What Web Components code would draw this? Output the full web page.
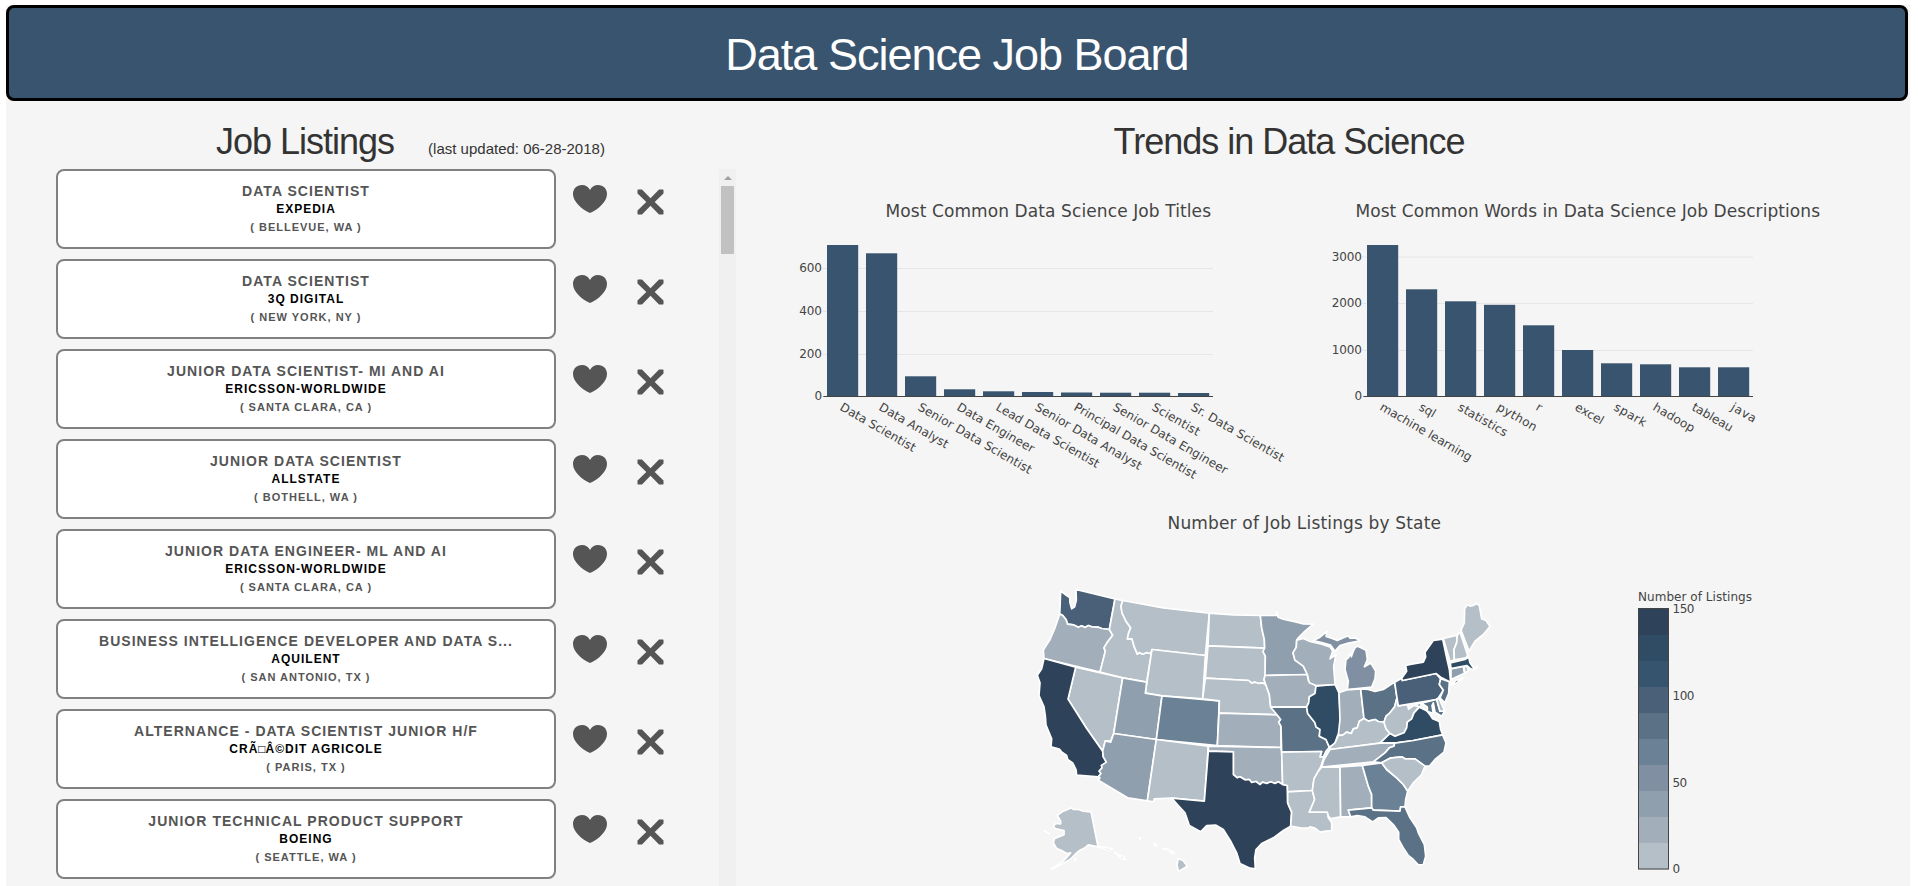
<!DOCTYPE html>
<html lang="en">
<head>
<meta charset="utf-8">
<title>Data Science Job Board</title>
<style>
html,body{margin:0;height:100%;overflow:hidden;background:#fff;font-family:"Liberation Sans",Arial,sans-serif}
</style>
</head>
<body>
<job-board></job-board>
<script>
const define = (name, html, setup) => {
  const t = document.createElement('template');
  t.innerHTML = html;
  customElements.define(name, class extends HTMLElement {
    constructor() {
      super();
      this.attachShadow({mode: 'open'}).appendChild(t.content.cloneNode(true));
    }
    connectedCallback() { if (setup) setup(this, this.shadowRoot); }
  });
};

define('board-header', `<style>
:host{display:flex;box-sizing:border-box;height:96px;margin-right:2px;border:3px solid #000;border-radius:8px;background:#39546e;align-items:center;justify-content:center}
h1{margin:0;padding-top:3px;color:#fff;font-weight:400;font-size:45px;line-height:54px;letter-spacing:-1px}
</style><h1><slot></slot></h1>`);

define('heart-icon', `<style>:host{display:block;width:34px;height:28px}svg{display:block}</style>
<svg width="34" height="28" viewBox="0 0 34 28"><path fill="#555" d="M17 5C15.200 1.700 12.500 0 9 0 3.800 0 0 3.800 0 9c0 4 2 7 5 10.500C8 23 12 26 17 28c5-2 9-5 12-8.500C32 16 34 13 34 9c0-5.200-3.800-9-9-9-3.500 0-6.200 1.700-8 5z"/></svg>`);

define('cross-icon', `<style>:host{display:block;width:27px;height:26px}svg{display:block}</style>
<svg width="27" height="26" viewBox="0 0 27 26"><path fill="#555" d="M1 .5h4l8.500 8.700L22 .5h4l.500.500v3.400L17.700 13l8.800 8.600V25l-.500.500h-4l-8.500-8.700L5 25.500H1L.500 25v-3.400L9.300 13 .500 4.400V1z"/></svg>`);

define('job-listing', `<style>
:host{display:flex;align-items:flex-start;height:80px}
.card{box-sizing:border-box;width:500px;height:80px;border:2px solid #808080;border-radius:8px;background:#fff;text-align:center;font-weight:700;color:#555;padding-top:10px}
.t{font-size:14px;line-height:20px;letter-spacing:1.040px;height:20px;white-space:nowrap}
.c{font-size:12px;line-height:16px;letter-spacing:1px;color:#000;height:16px}
.l{font-size:11px;line-height:20px;letter-spacing:1px}
heart-icon{margin:16px 0 0 17px}
cross-icon{margin:20px 0 0 30px}
</style>
<div class="card"><div class="t"><slot name="title"></slot></div><div class="c"><slot name="company"></slot></div><div class="l"><slot name="place"></slot></div></div>
<heart-icon></heart-icon><cross-icon></cross-icon>`);

define('scroll-rail', `<style>
:host{display:flex;flex-direction:column;align-items:center;width:17px;background:#f0f0f0}
i{width:0;height:0;border:4px solid transparent;border-top:0;border-bottom:4px solid #a0a0a0;margin:7px 0 6px}
b{width:13px;height:68px;background:#c1c1c1}
</style><i></i><b></b>`);

define('bar-chart', `<style>
:host{display:block;width:530px;height:300px}
svg{display:block;overflow:visible;font-family:"DejaVu Sans",Verdana,sans-serif}
text{fill:#444;font-size:12px}
.title{font-size:17px}
</style><svg width="530" height="300"></svg>`, (el, root) => {
  const d = JSON.parse(el.getAttribute('data'));
  const x0 = 57.3, y0 = 206.5, p = 39;
  let s = '';
  d.ticks.forEach(([v, y, w]) => {
    if (y < y0) s += `<path d="M${x0 - 1} ${y}H447" stroke="#e6e6e6"/>`;
    s += `<text x="${x0 - 1.5 - w}" y="${y + 3.800}" textLength="${w}">${v}</text>`;
  });
  d.bars.forEach(([label, top, len], i) => {
    s += `<rect x="${(x0 + 3.700 + i * p).toFixed(1)}" y="${top}" width="31.200" height="${y0 - top}" fill="#39546e"/>`;
    s += `<text transform="translate(${(x0 + 15.8 + i * p).toFixed(1)} 219.500) rotate(30)" textLength="${len - 1}">${label}</text>`;
  });
  s += `<path d="M${x0} ${y0}H447" stroke="#444"/>`;
  s += `<text class="title" x="${d.tx}" y="27" textLength="${d.tw}">${el.getAttribute('heading')}</text>`;
  root.querySelector('svg').innerHTML = s;
});

const STATES = [
['#4a6079','122,65 140,78 149,84 150,100 155,118 164,112 169,92 168,60 285,88 268,180 245,177 235,173 215,172 205,168 195,174 185,169 175,173 160,166 143,164 138,150 128,138 119,133 120,115'],
['#a2aeba','119,133 128,138 138,150 143,164 160,166 175,173 185,169 195,174 205,168 215,172 235,173 245,177 268,180 278,197 262,218 252,235 256,245 240,308 72,267 70,242 90,210 105,175 117,140'],
['#b5bfc7','285,88 308,93 303,110 306,130 318,155 332,175 326,190 322,208 336,208 342,230 352,254 358,249 368,254 380,249 392,252 396,240 380,338 308,325 240,308 256,245 252,235 262,218 278,197 268,180'],
['#b5bfc7','308,93 430,115 568,131 556,258 396,240 392,252 380,249 368,254 358,249 352,254 342,230 336,208 322,208 326,190 332,175 318,155 306,130 303,110'],
['#b5bfc7','396,240 556,258 548,388 426,379 376,371'],
['#b5bfc7','167,293 308,325 281,492 272,515 256,514 248,545 200,477 144,389'],
['#909fae','308,325 380,338 376,371 426,379 409,510 281,492'],
['#6b8195','426,379 598,394 592,528 409,510'],
['#2e4259','72,267 167,293 144,389 200,477 248,545 250,562 259,578 244,598 243,612 235,622 170,617 168,600 158,580 143,570 140,558 125,547 118,539 93,532 95,508 78,467 76,440 72,412 57,378 60,340 52,317 65,298'],
['#909fae','281,492 409,510 382,694 323,685 235,632 240,625 235,622 243,612 237,605 246,595 244,588 259,578 250,562 248,545 256,514 272,518'],
['#b5bfc7','409,510 565,530 553,695 455,686 403,688 400,697 382,694'],
['#b5bfc7','568,131 640,136 721,138 725,175 733,210 734,236 564,229'],
['#b5bfc7','564,229 734,236 729,246 736,260 736,318 732,330 738,347 728,340 716,342 705,338 695,341 686,333 556,326'],
['#b5bfc7','556,326 686,333 695,341 705,338 716,342 728,340 738,347 748,375 752,410 762,424 771,436 597,431 598,394 548,388'],
['#a2aeba','597,431 771,436 782,450 776,458 783,470 783,534 592,528'],
['#a2aeba','565,530 783,534 785,548 788,645 775,637 765,642 752,637 740,642 728,638 720,645 708,636 695,639 688,630 675,631 660,622 652,625 640,615 640,547 565,545'],
['#2e4259','565,545 640,547 640,615 652,625 660,622 675,631 688,630 695,639 708,636 720,645 728,638 740,642 752,637 765,642 775,637 788,645 802,648 803,700 815,728 812,770 790,783 760,805 725,822 708,840 704,865 706,898 690,896 660,882 650,850 632,815 610,780 588,767 560,768 542,787 508,768 495,730 475,708 455,686 553,695'],
['#909fae','721,138 768,138 770,126 774,143 790,149 830,158 850,163 880,164 855,185 835,205 830,212 829,233 819,250 825,272 850,290 862,315 735,318 736,260 729,246 734,236 733,210 725,175'],
['#a2aeba','735,318 862,315 865,333 875,338 888,350 885,372 868,382 866,400 860,412 752,413 748,375 738,347 732,330'],
['#5b7186','752,413 860,412 863,432 885,460 888,472 900,480 898,500 918,510 928,533 918,545 910,562 900,562 905,546 785,548 783,470 776,458 782,450 771,436'],
['#304c64','888,350 945,345 957,370 961,450 960,485 952,500 945,522 928,533 918,510 898,500 900,480 888,472 885,460 863,432 860,412 866,400 868,382 885,372'],
['#a2aeba','830,212 850,207 870,216 905,224 930,232 938,245 930,268 948,255 941,290 945,345 888,348 868,340 862,315 850,290 825,272 819,250 829,233'],
['#8090a2','880,213 900,203 922,185 918,201 935,206 952,213 970,205 985,199 990,206 1005,205 1020,214 985,221 960,228 945,245 932,227 905,219'],
['#8090a2','1005,235 1012,230 1020,233 1038,242 1042,270 1033,292 1045,285 1052,280 1067,305 1065,328 1055,353 982,360 985,335 975,300 978,270 985,265 992,250 994,262 1000,245'],
['#a2aeba','957,370 982,361 1022,358 1032,447 1018,455 1012,475 1000,478 994,492 980,488 968,497 955,496 960,450'],
['#5b7186','1022,358 1045,360 1065,366 1090,360 1124,338 1131,385 1124,412 1110,430 1098,440 1092,458 1075,456 1065,450 1045,455 1032,447'],
['#b5bfc7','1032,447 1045,455 1065,450 1075,456 1092,458 1098,478 1110,492 1080,521 930,540 930,533 945,520 955,498 968,497 980,488 994,492 1000,478 1012,475 1018,455'],
['#b5bfc7','1131,385 1135,409 1162,405 1166,419 1180,408 1198,411 1182,430 1175,448 1162,458 1160,475 1152,490 1125,500 1110,492 1098,478 1092,458 1098,440 1110,430 1124,412'],
['#304c64','1080,521 1110,492 1125,500 1152,490 1160,475 1162,458 1175,448 1182,430 1198,413 1206,417 1220,424 1230,436 1238,448 1258,456 1262,480 1268,496 1180,513 1124,521'],
['#a2aeba','930,540 1080,521 1124,520 1122,530 1108,535 1095,550 1060,577 905,593 912,570'],
['#5b7186','1060,577 1095,550 1108,535 1122,530 1124,521 1180,513 1268,496 1278,520 1272,548 1245,570 1228,590 1215,590 1185,568 1155,568 1145,562 1110,566 1085,580'],
['#b5bfc7','785,548 905,546 900,562 912,562 903,590 895,605 882,628 877,663 803,667 802,648 788,645'],
['#b5bfc7','803,667 877,663 884,690 868,728 922,728 925,745 935,760 935,783 918,785 900,788 885,776 870,772 865,776 840,775 812,770 815,728 803,700'],
['#b5bfc7','905,593 960,592 962,742 932,747 925,740 922,728 868,728 884,690 877,663 882,628 895,605'],
['#a2aeba','960,592 1027,588 1045,650 1055,675 1055,715 985,722 992,742 962,742'],
['#6b8195','1027,588 1085,580 1100,600 1130,625 1150,645 1163,665 1157,690 1155,712 1142,712 1140,725 1060,722 1055,715 1055,675 1045,650'],
['#b5bfc7','1085,580 1110,566 1145,562 1155,568 1185,568 1215,590 1205,615 1180,640 1163,665 1150,645 1130,625 1100,600'],
['#5b7186','985,722 1055,715 1060,722 1140,725 1142,712 1155,712 1170,745 1190,775 1195,790 1213,825 1217,860 1210,885 1195,886 1180,870 1165,858 1150,835 1136,810 1136,788 1120,765 1098,744 1075,745 1058,757 1035,742 1012,738 992,742'],
['#4a6079','1124,338 1145,326 1147,333 1248,312 1262,328 1258,345 1270,362 1255,385 1248,390 1135,409 1131,385'],
['#5b7186','1188,405 1250,390 1260,425 1274,425 1265,440 1245,428 1240,400 1236,408 1240,432 1222,425 1222,412 1206,402 1198,413'],
['#b5bfc7','1250,390 1257,386 1274,425 1260,425'],
['#5b7186','1262,328 1288,337 1286,372 1274,400 1260,385 1270,362 1258,345'],
['#2e4259','1147,333 1145,326 1160,305 1157,288 1175,284 1210,278 1217,262 1215,248 1240,213 1268,209 1280,265 1288,300 1292,338 1265,325 1248,312'],
['#2e4259','1290,346 1310,332 1330,326 1308,341'],
['#b5bfc7','1270,207 1312,197 1310,220 1302,240 1303,271 1290,276'],
['#b5bfc7','1312,197 1320,188 1343,257 1338,265 1303,271 1302,240 1310,220'],
['#b5bfc7','1323,182 1333,160 1334,118 1342,105 1350,110 1360,108 1370,102 1378,108 1385,148 1398,153 1410,171 1390,195 1365,215 1347,245'],
['#909fae','1293,298 1330,291 1333,311 1293,330'],
['#b5bfc7','1332,291 1340,290 1345,304 1335,310'],
['#304c64','1291,280 1335,270 1346,263 1350,280 1361,296 1371,290 1372,295 1358,300 1350,296 1340,288 1293,297'],
['#b5bfc7','118,733 130,725 155,715 160,720 175,720 190,725 213,727 234,832 205,826 195,835 180,842 170,850 150,870 125,884 100,897 92,899 130,875 152,850 140,852 125,843 110,837 100,820 103,808 132,796 132,783 105,777 100,768 108,762 122,763 122,755 112,738'],
['#b5bfc7','234,832 250,832 264,836 278,838 266,843'],
['#b5bfc7','284,848 300,858 310,862 316,871 304,866'],
['#b5bfc7','164,868 169,868 164,874'],
['#fff','72,783 80,788 88,793'],
['#b5bfc7','357,805 361,805 360,809'],
['#b5bfc7','402,822 407,824 410,830 404,828'],
['#fff','428,838 436,837 446,840'],
['#b5bfc7','449,843 457,847 462,850 455,851'],
['#b5bfc7','475,867 490,874 502,890 475,906 471,885']
];
define('state-map', `<style>
:host{display:block;height:376px}
svg{display:block;overflow:hidden;font-family:"DejaVu Sans",Verdana,sans-serif}
text{fill:#444;font-size:12px}
.title{font-size:17px}
polygon{stroke:#fff;stroke-width:5;stroke-linejoin:round}
</style><svg width="780" height="376"></svg>`, (el, root) => {
  let s = '<text class="title" x="147.500" y="18.500" textLength="273.500">Number of Job Listings by State</text><g transform="translate(0 59.500) scale(.33333)">';
  STATES.forEach(([c, p]) => { s += `<polygon fill="${c}" points="${p}"/>`; });
  s += '</g><text x="618" y="91" textLength="114">Number of Listings</text>';
  ['#2e4259','#304c64','#37546f','#4a6079','#5b7186','#6b8195','#8090a2','#909fae','#a2aeba','#b5bfc7'].forEach((c, i) => {
    s += `<rect x="618.500" y="${99 + i * 26}" width="30" height="26.500" fill="${c}"/>`;
  });
  s += '<rect x="618.500" y="98.500" width="30" height="260.500" fill="none" stroke="#444"/>';
  [['150',103,22],['100',190,22],['50',276.8,14.7],['0',363,7.2]].forEach(([t, y, w]) => { s += `<text x="652.500" y="${y}" textLength="${w}">${t}</text>`; });
  root.querySelector('svg').innerHTML = s;
});

define('job-board', `<style>
:host{display:block;margin:5px 8px 0 6px;height:881px;background:#f5f5f5;overflow:hidden}
.cols{display:flex}
.left{width:760px}
.right{width:1070px}
h2{margin:0;font-weight:400;font-size:36px;line-height:45px;letter-spacing:-1px;color:#333}
.head{display:flex;align-items:baseline;padding:18px 0 0 210px;height:50px;gap:34px;color:#333}
.head span{font-size:15px}
.body{display:flex;height:717px;justify-content:space-between;padding:0 36px 0 50px}
.body scroll-rail{margin-right:-6px}
.list{display:flex;flex-direction:column;gap:10px}
.right h2{padding-top:18px;width:1046px;text-align:center;height:67px}
.charts{display:flex;gap:10px;height:320px;margin-top:4px}
state-map{margin-left:254px}
small{font-size:12px;font-weight:400;letter-spacing:0}
</style>
<board-header>Data Science Job Board</board-header>
<div class="cols">
 <div class="left">
  <div class="head"><h2>Job Listings</h2><span>(last updated: 06-28-2018)</span></div>
  <div class="body"><div class="list">
   <job-listing><span slot="title">DATA SCIENTIST</span><span slot="company">EXPEDIA</span><span slot="place">( BELLEVUE, WA )</span></job-listing>
   <job-listing><span slot="title">DATA SCIENTIST</span><span slot="company">3Q DIGITAL</span><span slot="place">( NEW YORK, NY )</span></job-listing>
   <job-listing><span slot="title">JUNIOR DATA SCIENTIST- MI AND AI</span><span slot="company">ERICSSON-WORLDWIDE</span><span slot="place">( SANTA CLARA, CA )</span></job-listing>
   <job-listing><span slot="title">JUNIOR DATA SCIENTIST</span><span slot="company">ALLSTATE</span><span slot="place">( BOTHELL, WA )</span></job-listing>
   <job-listing><span slot="title">JUNIOR DATA ENGINEER- ML AND AI</span><span slot="company">ERICSSON-WORLDWIDE</span><span slot="place">( SANTA CLARA, CA )</span></job-listing>
   <job-listing><span slot="title">BUSINESS INTELLIGENCE DEVELOPER AND DATA S...</span><span slot="company">AQUILENT</span><span slot="place">( SAN ANTONIO, TX )</span></job-listing>
   <job-listing><span slot="title">ALTERNANCE - DATA SCIENTIST JUNIOR H/F</span><span slot="company">CRÃ<small>□</small>Â©DIT AGRICOLE</span><span slot="place">( PARIS, TX )</span></job-listing>
   <job-listing><span slot="title">JUNIOR TECHNICAL PRODUCT SUPPORT</span><span slot="company">BOEING</span><span slot="place">( SEATTLE, WA )</span></job-listing>
  </div><scroll-rail></scroll-rail></div>
 </div>
 <div class="right">
  <h2>Trends in Data Science</h2>
  <div class="charts">
   <bar-chart heading="Most Common Data Science Job Titles" data='{"tx":119.5,"tw":325.5,"ticks":[["600",78.5,22.5],["400",121.5,22.5],["200",164.5,22.5],["0",206.5,7.2]],"bars":[["Data Scientist",55,86],["Data Analyst",63.3,79],["Senior Data Scientist",186.3,130],["Data Engineer",199.3,88],["Lead Data Scientist",201.3,118],["Senior Data Analyst",202,122],["Principal Data Scientist",202.5,140],["Senior Data Engineer",202.7,131],["Scientist",202.7,54],["Sr. Data Scientist",203,106]]}'></bar-chart>
   <bar-chart heading="Most Common Words in Data Science Job Descriptions" data='{"tx":49.5,"tw":464.5,"ticks":[["3000",67,30],["2000",113.5,30],["1000",160.5,30],["0",206.5,7.2]],"bars":[["machine learning",55,105],["sql",99.3,18],["statistics",111.3,56],["python",114.8,45],["r",135.3,5],["excel",160,32],["spark",173.3,36],["hadoop",174.3,47],["tableau",177.3,46],["java",177.3,28]]}'></bar-chart>
  </div>
  <state-map></state-map>
 </div>
</div>`);
</script>
</body>
</html>
